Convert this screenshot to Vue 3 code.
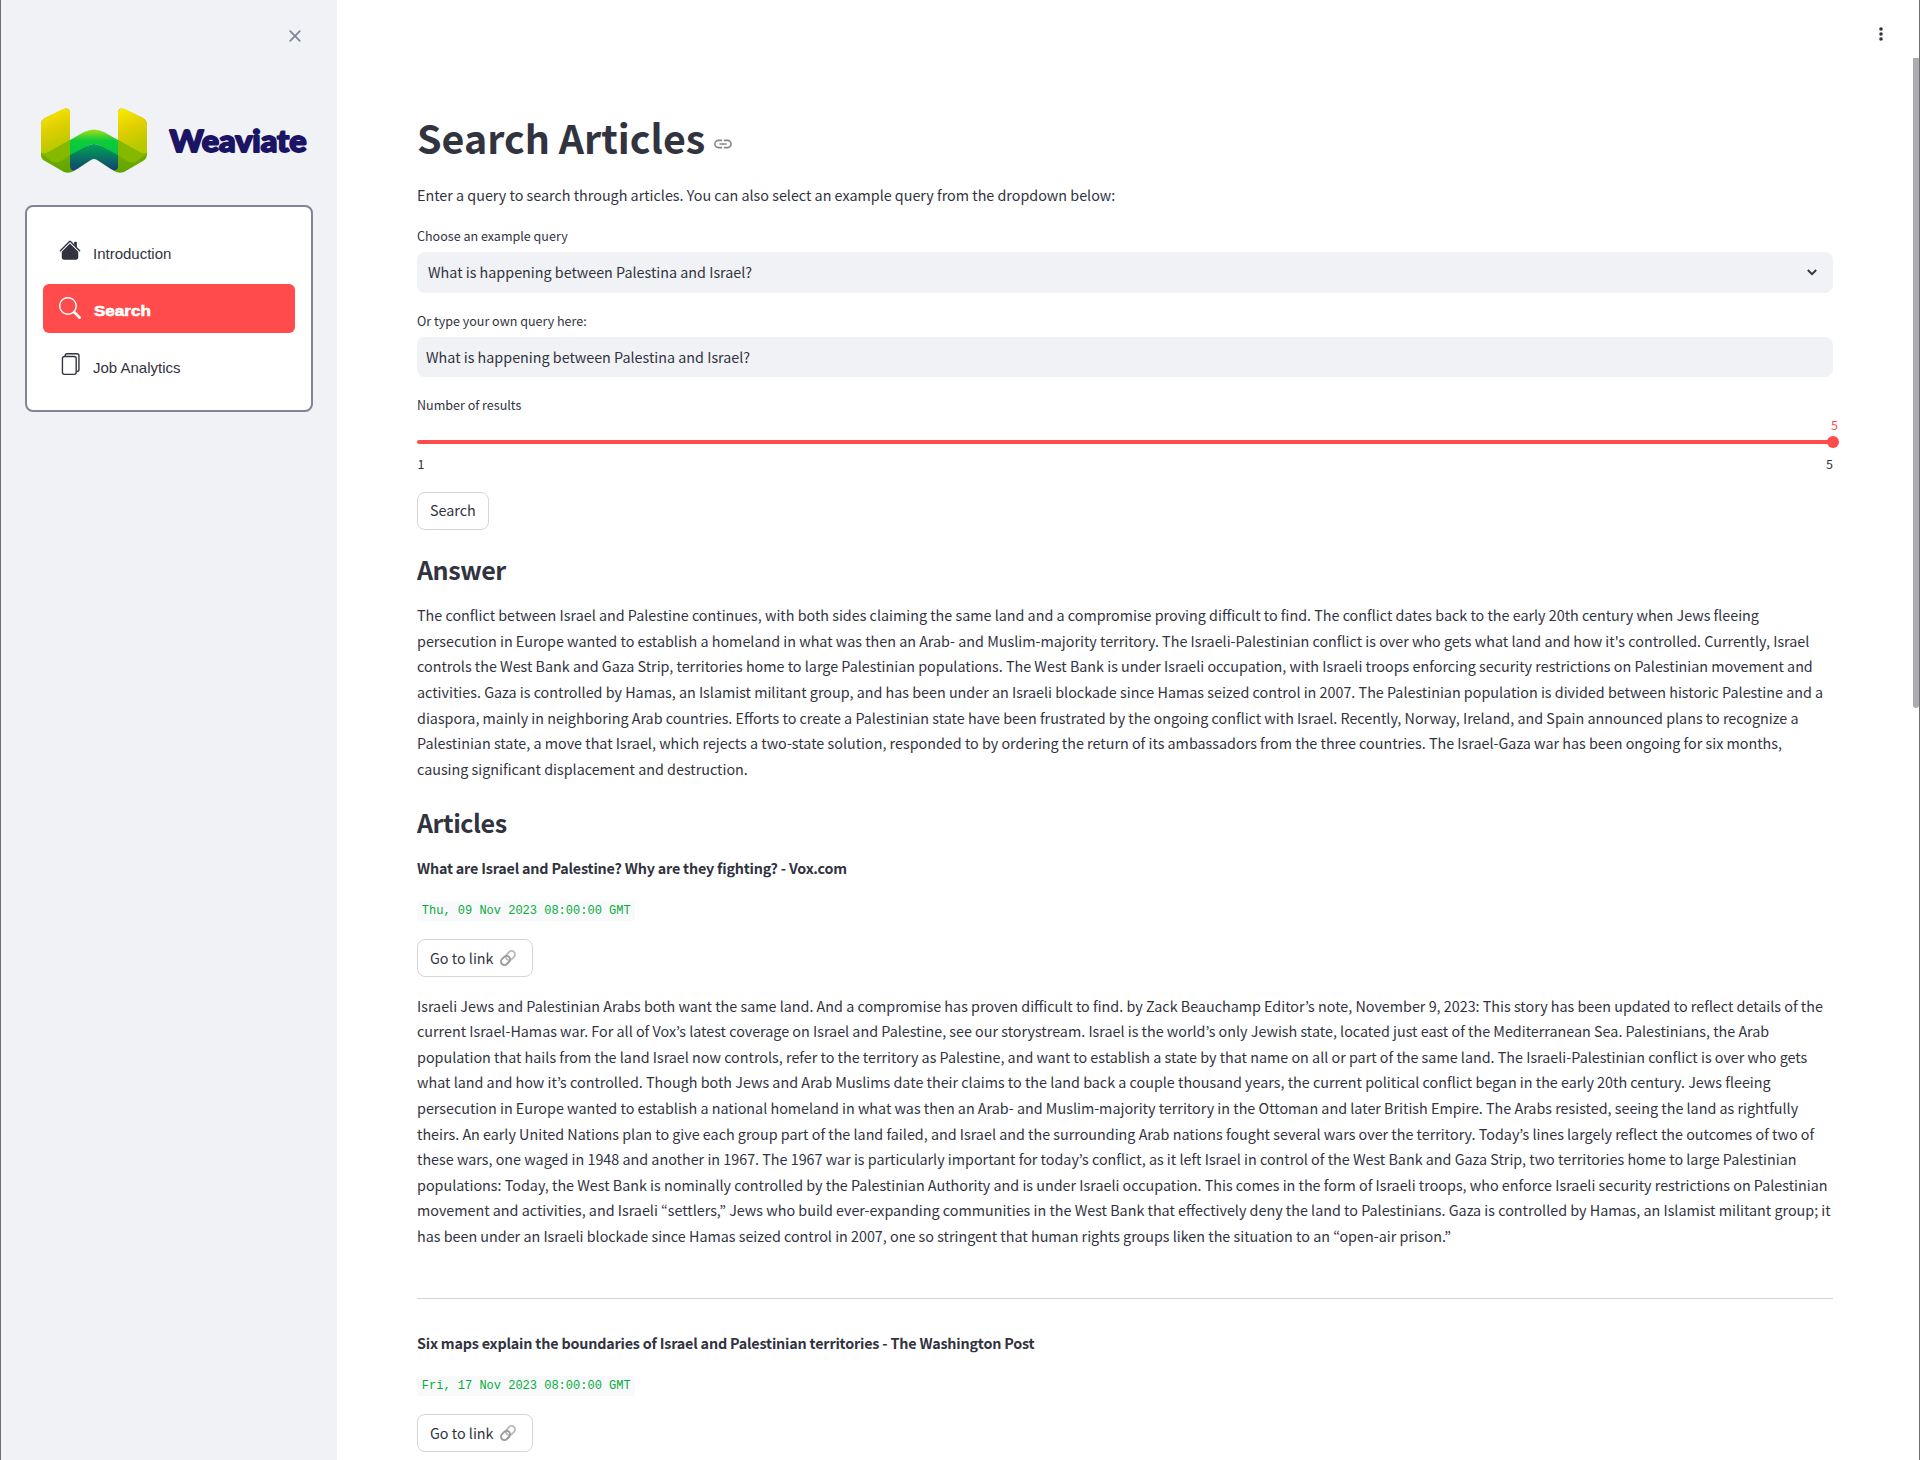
<script setup>
const menu = [
  { label: 'Introduction', icon: 'home' },
  { label: 'Search', icon: 'search', active: true },
  { label: 'Job Analytics', icon: 'files' },
]

const query = 'What is happening between Palestina and Israel?'

const answer = [
  'The conflict between Israel and Palestine continues, with both sides claiming the same land and a compromise proving difficult to find. The conflict dates back to the early 20th century when Jews fleeing',
  "persecution in Europe wanted to establish a homeland in what was then an Arab- and Muslim-majority territory. The Israeli-Palestinian conflict is over who gets what land and how it's controlled. Currently, Israel",
  'controls the West Bank and Gaza Strip, territories home to large Palestinian populations. The West Bank is under Israeli occupation, with Israeli troops enforcing security restrictions on Palestinian movement and',
  'activities. Gaza is controlled by Hamas, an Islamist militant group, and has been under an Israeli blockade since Hamas seized control in 2007. The Palestinian population is divided between historic Palestine and a',
  'diaspora, mainly in neighboring Arab countries. Efforts to create a Palestinian state have been frustrated by the ongoing conflict with Israel. Recently, Norway, Ireland, and Spain announced plans to recognize a',
  'Palestinian state, a move that Israel, which rejects a two-state solution, responded to by ordering the return of its ambassadors from the three countries. The Israel-Gaza war has been ongoing for six months,',
  'causing significant displacement and destruction.',
]

const articles = [
  {
    title: 'What are Israel and Palestine? Why are they fighting? - Vox.com',
    date: 'Thu, 09 Nov 2023 08:00:00 GMT',
    body: [
      'Israeli Jews and Palestinian Arabs both want the same land. And a compromise has proven difficult to find. by Zack Beauchamp Editor’s note, November 9, 2023: This story has been updated to reflect details of the',
      'current Israel-Hamas war. For all of Vox’s latest coverage on Israel and Palestine, see our storystream. Israel is the world’s only Jewish state, located just east of the Mediterranean Sea. Palestinians, the Arab',
      'population that hails from the land Israel now controls, refer to the territory as Palestine, and want to establish a state by that name on all or part of the same land. The Israeli-Palestinian conflict is over who gets',
      'what land and how it’s controlled. Though both Jews and Arab Muslims date their claims to the land back a couple thousand years, the current political conflict began in the early 20th century. Jews fleeing',
      'persecution in Europe wanted to establish a national homeland in what was then an Arab- and Muslim-majority territory in the Ottoman and later British Empire. The Arabs resisted, seeing the land as rightfully',
      'theirs. An early United Nations plan to give each group part of the land failed, and Israel and the surrounding Arab nations fought several wars over the territory. Today’s lines largely reflect the outcomes of two of',
      'these wars, one waged in 1948 and another in 1967. The 1967 war is particularly important for today’s conflict, as it left Israel in control of the West Bank and Gaza Strip, two territories home to large Palestinian',
      'populations: Today, the West Bank is nominally controlled by the Palestinian Authority and is under Israeli occupation. This comes in the form of Israeli troops, who enforce Israeli security restrictions on Palestinian',
      'movement and activities, and Israeli “settlers,” Jews who build ever-expanding communities in the West Bank that effectively deny the land to Palestinians. Gaza is controlled by Hamas, an Islamist militant group; it',
      'has been under an Israeli blockade since Hamas seized control in 2007, one so stringent that human rights groups liken the situation to an “open-air prison.”',
    ],
  },
  {
    title: 'Six maps explain the boundaries of Israel and Palestinian territories - The Washington Post',
    date: 'Fri, 17 Nov 2023 08:00:00 GMT',
    body: [],
  },
]
</script>

<template>
  <div class="app">
    <aside class="sidebar">
      <div class="sidebar-top">
        <svg class="close" viewBox="0 0 12 12" width="12" height="12">
          <path d="M.7.7 11.300 11.300M11.300.7.7 11.300" fill="none" stroke="#808495" stroke-width="1.7" />
        </svg>
      </div>

      <svg class="logo" viewBox="0 0 270 66" width="270" height="66">
        <defs>
          <linearGradient id="wing" x1="0" y1="0" x2="0.25" y2="1">
            <stop offset="0" stop-color="#fdec00" />
            <stop offset="0.5" stop-color="#e0cf00" />
            <stop offset="1" stop-color="#b4c900" />
          </linearGradient>
          <linearGradient id="side" x1="0" y1="0" x2="0" y2="1">
            <stop offset="0" stop-color="#93bd00" />
            <stop offset="0.55" stop-color="#7db500" />
            <stop offset="1" stop-color="#5ea400" />
          </linearGradient>
          <linearGradient id="arch" x1="0" y1="0" x2="0" y2="1">
            <stop offset="0" stop-color="#a5de1c" />
            <stop offset="0.4" stop-color="#0fcb38" />
            <stop offset="1" stop-color="#00c548" />
          </linearGradient>
          <linearGradient id="base" x1="0" y1="0" x2="0" y2="1">
            <stop offset="0" stop-color="#00a353" />
            <stop offset="0.45" stop-color="#087a60" />
            <stop offset="1" stop-color="#124078" />
          </linearGradient>
        </defs>
        <path d="M0 44V16Q0 12 4 10L23 1Q28-1 29 4V32L53 40L77 32V4Q78-1 83 1L102 10Q106 13 106 16V46Q106 51 102 53L83 64Q78 66 73 63L53 50L33 63Q28 66 23 64L4 53Q0 51 0 47Z" fill="url(#side)" />
        <path d="M29 32 43 24Q53 19 63 24L77 32V49L60 38Q53 34 46 38L29 49Z" fill="url(#arch)" />
        <path d="M29 47 46 38Q53 34 60 38L77 47V60Q75 64 70 61L58 53Q53 49 48 53L36 61Q30 65 29 58Z" fill="url(#base)" />
        <path d="M0 44V16Q0 13 4 10L22 1Q27-1 29 4V32L6 45Q1 47 0 44Z" fill="url(#wing)" />
        <path d="M106 44V16Q106 13 102 10L84 1Q79-1 77 4V32L100 45Q105 47 106 44Z" fill="url(#wing)" />
        <path d="M29 32V47L20 53Q15 56 10 53L1 46Q3 46 6 45ZM77 32V47L86 53Q91 56 96 53L105 46Q103 46 100 45Z" fill="#84b900" />
        <text x="128.500" y="43.800" textLength="137" lengthAdjust="spacingAndGlyphs" class="brand">Weaviate</text>
      </svg>

      <nav class="menu">
        <a v-for="item in menu" :key="item.label" class="menu-item" :class="{ active: item.active }">
          <svg v-if="item.icon === 'home'" viewBox="0 0 16 16" width="22" height="22" fill="currentColor">
            <path d="m8 3.293 6 6V13.5a1.5 1.5 0 0 1-1.5 1.5h-9A1.5 1.5 0 0 1 2 13.5V9.293l6-6zm5-.793V6l-2-2V2.500a.5.5 0 0 1 .5-.5h1a.5.5 0 0 1 .5.5z" />
            <path d="M7.293 1.500a1 1 0 0 1 1.414 0l6.647 6.646a.5.5 0 0 1-.708.708L8 2.207 1.354 8.854a.5.5 0 1 1-.708-.708L7.293 1.500z" />
          </svg>
          <svg v-else-if="item.icon === 'search'" viewBox="0 0 16 16" width="22" height="22" fill="currentColor">
            <path d="M11.742 10.344a6.500 6.500 0 1 0-1.397 1.398h-.001c.03.04.062.078.098.115l3.850 3.850a1 1 0 0 0 1.415-1.414l-3.850-3.850a1.007 1.007 0 0 0-.115-.1zM12 6.500a5.500 5.500 0 1 1-11 0 5.500 5.500 0 0 1 11 0z" />
          </svg>
          <svg v-else viewBox="0 0 16 16" width="22" height="22" fill="currentColor">
            <path d="M13 0H6a2 2 0 0 0-2 2 2 2 0 0 0-2 2v10a2 2 0 0 0 2 2h7a2 2 0 0 0 2-2 2 2 0 0 0 2-2V2a2 2 0 0 0-2-2zm0 13V4a2 2 0 0 0-2-2H5a1 1 0 0 1 1-1h7a1 1 0 0 1 1 1v10a1 1 0 0 1-1 1zM3 4a1 1 0 0 1 1-1h7a1 1 0 0 1 1 1v10a1 1 0 0 1-1 1H4a1 1 0 0 1-1-1V4z" />
          </svg>
          <span>{{ item.label }}</span>
        </a>
      </nav>
    </aside>

    <main class="main">
      <svg class="kebab" viewBox="0 0 4 14" width="4" height="14" fill="#31333f">
        <circle cx="2" cy="2" r="1.8" /><circle cx="2" cy="7" r="1.8" /><circle cx="2" cy="12" r="1.8" />
      </svg>
      <div class="scrollbar"></div>

      <h1>
        <span>Search Articles</span>
        <svg viewBox="0 0 20 10" width="18" height="10">
          <path d="M9 1H5a4 4 0 0 0 0 8H9M11 1h4a4 4 0 0 1 0 8H11M6 5h8" fill="none" stroke="#83858c" stroke-width="1.8" />
        </svg>
      </h1>
      <p class="lead">Enter a query to search through articles. You can also select an example query from the dropdown below:</p>

      <label class="label">Choose an example query</label>
      <div class="field select">
        <span>{{ query }}</span>
        <svg viewBox="0 0 10 7" width="10" height="7">
          <path d="M.8 1 5 5.200 9.200 1" fill="none" stroke="#31333f" stroke-width="1.900" />
        </svg>
      </div>

      <label class="label second">Or type your own query here:</label>
      <div class="field input"><span>{{ query }}</span></div>

      <label class="label second">Number of results</label>
      <div class="slider">
        <div class="slider-value">5</div>
        <div class="track"><i class="thumb"></i></div>
        <div class="ticks"><span>1</span><span>5</span></div>
      </div>

      <button class="btn">Search</button>

      <h2>Answer</h2>
      <p class="text"><span v-for="line in answer" :key="line">{{ line }}</span></p>

      <h2 class="articles">Articles</h2>
      <article v-for="a in articles" :key="a.title">
        <h3>{{ a.title }}</h3>
        <code>{{ a.date }}</code>
        <button class="btn link">
          Go to link
          <svg viewBox="0 0 16 16" width="16" height="16">
            <g fill="none" stroke-width="1.900" transform="rotate(-45 8 8)">
              <rect x="6.500" y="4.600" width="10" height="6.800" rx="3.400" stroke="#bdbdbd" />
              <rect x="-.5" y="4.600" width="10" height="6.800" rx="3.400" stroke="#9b9b9b" />
            </g>
          </svg>
        </button>
        <p v-if="a.body.length" class="text"><span v-for="line in a.body" :key="line">{{ line }}</span></p>
      </article>
    </main>
  </div>
</template>

<style>
body {
  margin: 0;
  overflow: hidden;
}
</style>

<style scoped>
* {
  box-sizing: border-box;
}
.app {
  display: flex;
  width: 1920px;
  height: 1460px;
  overflow: hidden;
  border: solid #6f6f6f;
  border-width: 0 1px;
  background: #fff;
  color: #31333f;
  font-family: "Noto Sans CJK KR", "Noto Sans", sans-serif;
  font-size: 14.33px;
  line-height: 25.6px;
}
.sidebar {
  flex: none;
  width: 336px;
  background: #f0f2f6;
}
.sidebar-top {
  display: flex;
  justify-content: flex-end;
  height: 108px;
  padding: 30px 36px 0 0;
}
.logo {
  display: block;
  margin-left: 40px;
  overflow: visible;
}
.brand {
  font: 900 29.5px Lato, sans-serif;
  fill: #1b1464;
  stroke: #1b1464;
  stroke-width: 1.8px;
  stroke-linejoin: round;
}
.menu {
  display: flex;
  flex-direction: column;
  gap: 8px;
  width: 288px;
  height: 207px;
  margin: 31px 0 0 24px;
  padding: 20px 16px;
  border: 2px solid #808495;
  border-radius: 8px;
  background: #fff;
}
.menu-item {
  display: flex;
  align-items: center;
  gap: 12px;
  height: 49px;
  padding: 4px 16px 0;
  border-radius: 6px;
  font: 15px "Liberation Sans", Arial, sans-serif;
}
.menu-item svg {
  margin-top: -7px;
}
.menu-item.active {
  background: #ff4b4b;
  color: #fff;
  font-weight: 700;
  font-size: 15.500px;
}
.menu-item.active svg {
  margin-top: -5px;
}
.menu-item.active span {
  margin: 1px 0 0 1px;
  transform: scaleX(1.1);
  transform-origin: left;
  -webkit-text-stroke: 0.6px #fff;
}
.main {
  position: relative;
  flex: 1;
  min-width: 0;
  padding: 110.300px 86px 0 80px;
}
.kebab {
  position: absolute;
  top: 27px;
  right: 36px;
}
.scrollbar {
  position: absolute;
  top: 58px;
  right: 0;
  width: 6px;
  height: 650px;
  border-radius: 0 0 3px 3px;
  background: #acacb2;
}
h1, h2, h3, p {
  margin: 0;
}
h1 {
  display: flex;
  align-items: center;
  gap: 9px;
  height: 53px;
  font-size: 39.4px;
  line-height: 53px;
  font-weight: 700;
}
h1 svg {
  margin-top: 14px;
}
.lead {
  margin-top: 18.700px;
}
.label {
  display: block;
  height: 22px;
  margin-top: 17.800px;
  font-size: 12.540px;
  line-height: 22px;
}
.field {
  display: flex;
  align-items: center;
  justify-content: space-between;
  border-radius: 8px;
  background: #f0f2f6;
}
.select {
  height: 41px;
  margin-top: 4.600px;
  padding: 0 16px 0 11px;
}
.select span {
  margin-top: -2px;
}
.second {
  margin-top: 17.400px;
}
.input {
  height: 40px;
  margin-top: 4.600px;
  padding-left: 9px;
}
.slider {
  height: 75.600px;
  font-size: 12.540px;
  line-height: 18px;
}
.slider-value {
  height: 23.600px;
  margin-right: -5px;
  color: #ff4b4b;
  text-align: right;
}
.track {
  display: flex;
  align-items: center;
  justify-content: flex-end;
  height: 4px;
  border-radius: 4px;
  background: #ff4b4b;
}
.thumb {
  flex: none;
  width: 12px;
  height: 12px;
  margin-right: -6px;
  border-radius: 50%;
  background: #ff4b4b;
}
.ticks {
  display: flex;
  justify-content: space-between;
  padding: 11.300px 0 0 .5px;
}
.btn {
  display: flex;
  align-items: center;
  height: 38px;
  padding: 0 12px 3px;
  border: 1px solid #d6d6d9;
  border-radius: 8px;
  background: #fff;
  color: inherit;
  font: inherit;
}
h2 {
  margin-top: 22px;
  font-size: 25.070px;
  line-height: 34px;
  font-weight: 600;
  letter-spacing: -0.45px;
}
.text {
  margin-top: 16.200px;
}
.text span {
  display: block;
  white-space: nowrap;
}
.articles {
  margin-top: 23.600px;
}
h3 {
  margin-top: 16px;
  font-size: 14.330px;
  line-height: 25.600px;
  font-weight: 600;
  letter-spacing: -0.187px;
}
code {
  display: block;
  width: max-content;
  height: 20px;
  margin-top: 20.400px;
  padding: 0 4.800px;
  border-radius: 4px;
  background: #f8f9fb;
  color: #09ab3b;
  font-family: "Liberation Mono", monospace;
  font-size: 12px;
  line-height: 20px;
}
.link {
  gap: 6px;
  height: 38.500px;
  margin-top: 18px;
  padding: 0 16px 1px 12px;
}
article .text {
  margin-top: 15.200px;
}
article + article {
  margin-top: 49.300px;
  border-top: 1px solid #d6d6d9;
  padding-top: 15px;
}
</style>
